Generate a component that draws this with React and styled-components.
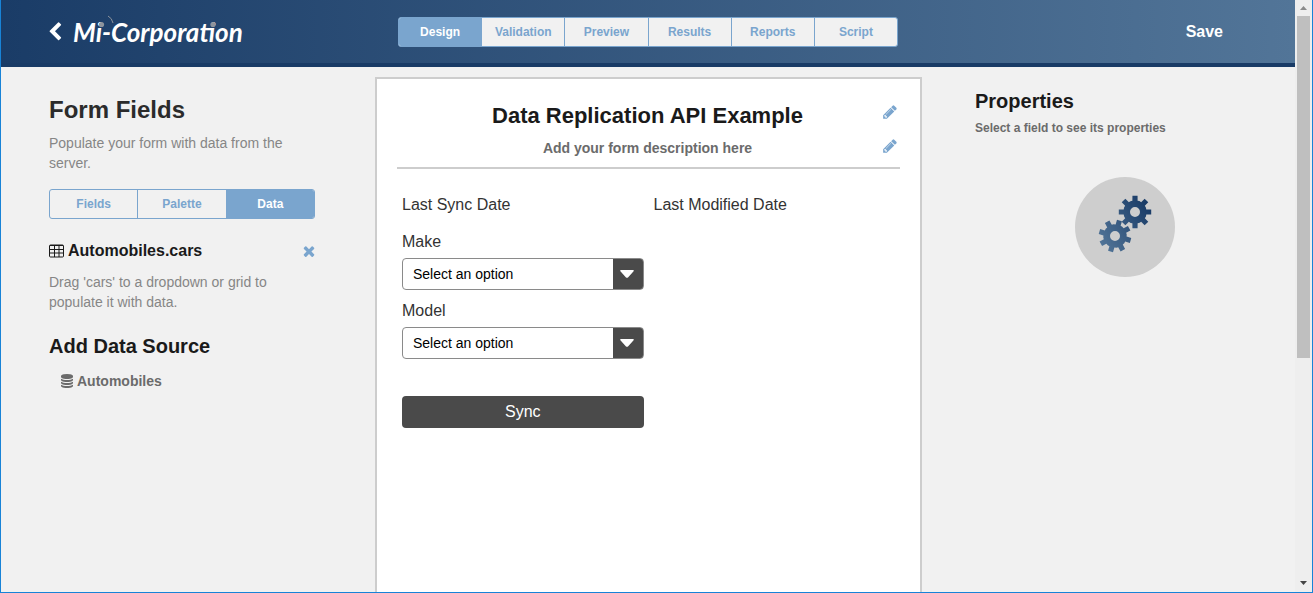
import React from 'react';
import styled, { createGlobalStyle } from 'styled-components';

const color = {
  accent: '#7aa5ce',
  navy: '#193b66',
  page: '#f1f1f1',
  line: '#cdcdcd',
  dark: '#4a4a4a',
  heading: '#1a1a1a',
  muted: '#868686',
  strongMuted: '#6b6b6b',
};

const GlobalStyle = createGlobalStyle`
  *, *::before, *::after { box-sizing: border-box; }
  body {
    margin: 0;
    background: ${color.page};
    font-family: "Liberation Sans", Arial, sans-serif;
    font-size: 14px;
    line-height: 20px;
  }
  h1, h2, h3, p { margin: 0; }
  button, select { font-family: inherit; }
`;

const Frame = styled.div`
  display: flex;
  height: 100vh;
  border: solid #1883d7;
  border-width: 0 1px 1px;
  overflow: hidden;
`;

const Page = styled.div`
  flex: 1;
  min-width: 0;
  display: flex;
  flex-direction: column;
`;

const Header = styled.header`
  display: grid;
  grid-template-columns: 1fr minmax(0, 500px) 1fr;
  align-items: center;
  padding: 0 72px 0 44px;
  height: 67px;
  background: linear-gradient(to right, #1a3c67, #527598);
  border-bottom: 4px solid ${color.navy};
`;

const Brand = styled.a`
  display: flex;
  align-items: center;
  gap: 8px;
  color: #fff;
  text-decoration: none;
`;

const HeaderTabs = styled.nav`
  display: flex;
  margin: 0 -14px 0 14px;
`;

const SaveButton = styled.button`
  justify-self: end;
  padding: 0;
  border: 0;
  background: none;
  color: #fff;
  font-size: 16px;
  font-weight: bold;
  line-height: 20px;
`;

const TabGroup = styled.div`
  flex: 1;
  display: flex;
  height: 30px;
  border: 1px solid ${color.accent};
  border-radius: 3px;
  background: ${color.page};
  overflow: hidden;
`;

const Tab = styled.button`
  flex: 1 1 0;
  padding: 0;
  border: 0;
  border-left: ${(p) => (p.$first ? '0' : `1px solid ${color.accent}`)};
  background: ${(p) => (p.$active ? color.accent : 'transparent')};
  color: ${(p) => (p.$active ? '#fff' : color.accent)};
  font-size: 12px;
  font-weight: bold;
  line-height: 16px;
`;

const Columns = styled.main`
  flex: 1;
  min-height: 0;
  display: grid;
  grid-template-columns: 374fr 547fr 373fr;
`;

const Sidebar = styled.aside`
  padding: 30px 60px 0 48px;
`;

const PanelTitle = styled.h1`
  color: #2b2b2b;
  font-size: 24px;
  line-height: 26px;
`;

const SectionTitle = styled.h2`
  color: ${color.heading};
  font-size: 20px;
  line-height: 24px;
`;

const Hint = styled.p`
  color: ${color.muted};
`;

const SidebarIntro = styled(Hint)`
  padding: 10px 0 16px;
`;

const SourceRow = styled.div`
  display: flex;
  align-items: center;
  gap: 4px;
  margin: 22px -2px 11px 0;
  color: ${color.heading};
`;

const SourceName = styled.h3`
  flex: 1;
  font-size: 16px;
  line-height: 20px;
`;

const IconButton = styled.button`
  display: flex;
  padding: 0;
  border: 0;
  background: none;
  color: ${color.accent};
`;

const AddSource = styled.section`
  padding-top: 22px;
`;

const SourceLink = styled.a`
  display: flex;
  align-items: center;
  gap: 3px;
  padding: 13px 0 0 11px;
  color: ${color.strongMuted};
  font-weight: bold;
  text-decoration: none;
`;

const Canvas = styled.section`
  margin-top: 10px;
  padding: 24px 20px 0;
  border: solid ${color.line};
  border-width: 2px 2px 0;
  background: #fff;
`;

const FormHeader = styled.header`
  display: flex;
  flex-direction: column;
  gap: 9px;
  padding-bottom: 9px;
  border-bottom: 2px solid ${color.line};
`;

const EditableRow = styled.div`
  display: grid;
  grid-template-columns: 32px 1fr 32px;
  padding-right: 2px;
  text-align: center;

  ${IconButton} { justify-self: end; align-self: start; }
`;

const EditTitleButton = styled(IconButton)`
  padding-top: 1px;
`;

const FormTitle = styled.h2`
  color: ${color.heading};
  font-size: 22px;
  line-height: 26px;
`;

const FormDescription = styled.p`
  color: ${color.strongMuted};
  font-weight: bold;
  line-height: 20px;
`;

const FormGrid = styled.div`
  display: grid;
  grid-template-columns: 1fr 1fr;
  column-gap: 10px;
  padding: 26px 5px 0;
  color: #333;
  font-size: 16px;
`;

const FieldStack = styled.div`
  grid-column: 1;
  display: flex;
  flex-direction: column;
  gap: 11px;
  padding-top: 17px;
`;

const Field = styled.div`
  display: flex;
  flex-direction: column;
  gap: 6px;
`;

const SelectBox = styled.div`
  display: flex;
  height: 32px;
  border: 1px solid #8a8a8a;
  border-radius: 4px;
  background: linear-gradient(${color.dark}, ${color.dark}) right / 30px 100% no-repeat #fff;
  overflow: hidden;
`;

const Select = styled.select`
  flex: 1;
  min-width: 0;
  margin-right: -30px;
  padding: 0 40px 0 10px;
  border: 0;
  appearance: none;
  background: transparent;
  color: #000;
  font-size: 14px;
`;

const SelectArrow = styled.svg`
  flex: none;
  align-self: center;
  width: 30px;
  height: 8px;
  pointer-events: none;
`;

const SyncButton = styled.button`
  height: 32px;
  margin-top: 26px;
  border: 0;
  border-radius: 4px;
  background: ${color.dark};
  color: #fff;
  font-size: 16px;
`;

const Properties = styled.aside`
  padding: 22px 20px 0 53px;
`;

const PropertiesHint = styled.p`
  padding-top: 7px;
  color: ${color.strongMuted};
  font-size: 12px;
  font-weight: bold;
  line-height: 16px;
`;

const GearBadge = styled.svg`
  display: block;
  margin: 41px auto 0;
`;

const Scrollbar = styled.div`
  display: flex;
  flex-direction: column;
  align-items: center;
  width: 17px;
  padding: 6px 0 7px;
  background: #eee;
`;

const Thumb = styled.div`
  width: 13px;
  height: 59%;
  margin-top: 6px;
  background: #bfbfbf;
`;

const Spacer = styled.div`
  flex: 1;
`;

const glyphs = {
  back: 'M1427 301l-531 531 531 531q19 19 19 45t-19 45l-166 166q-19 19-45 19t-45-19l-742-742q-19-19-19-45t19-45l742-742q19-19 45-19t45 19l166 166q19 19 19 45t-19 45z',
  pencil: 'M491 1536l91-91-235-235-91 91v107h128v128h107zm523-928q0-22-22-22-10 0-17 7l-542 542q-7 7-7 17 0 22 22 22 10 0 17-7l542-542q7-7 7-17zm-54-192l416 416-832 832h-416v-416zm683 96q0 53-37 90l-166 166-416-416 166-165q36-38 90-38 53 0 91 38l235 234q37 39 37 91z',
  times: 'M1490 1322q0 40-28 68l-136 136q-28 28-68 28t-68-28l-294-294-294 294q-28 28-68 28t-68-28l-136-136q-28-28-28-68t28-68l294-294-294-294q-28-28-28-68t28-68l136-136q28-28 68-28t68 28l294 294 294-294q28-28 68-28t68 28l136 136q28 28 28 68t-28 68l-294 294 294 294q28 28 28 68z',
  database: 'M896 768q237 0 443-43t325-127v170q0 69-103 128t-280 93.5-385 34.5-385-34.5-280-93.5-103-128v-170q119 84 325 127t443 43zm0 768q237 0 443-43t325-127v170q0 69-103 128t-280 93.5-385 34.5-385-34.5-280-93.5-103-128v-170q119 84 325 127t443 43zm0-384q237 0 443-43t325-127v170q0 69-103 128t-280 93.5-385 34.5-385-34.5-280-93.5-103-128v-170q119 84 325 127t443 43zm0-1152q208 0 385 34.5t280 93.5 103 128v128q0 69-103 128t-280 93.5-385 34.5-385-34.5-280-93.5-103-128v-128q0-69 103-128t280-93.5 385-34.5z',
};

const Glyph = ({ name, size }) => (
  <svg width={size} height={size} viewBox="0 0 1792 1792" fill="currentColor" aria-hidden="true">
    <path d={glyphs[name]} />
  </svg>
);

const TableGlyph = () => (
  <svg width="15" height="14" viewBox="0 0 15 14" fill="none" stroke="currentColor" aria-hidden="true">
    <rect x="0.5" y="1" width="14" height="12" rx="1" />
    <path d="M1 1.500h13M1 5.500h13M1 9h13M5.500 2v11M10 2v11" />
  </svg>
);

const Logo = () => (
  <svg width="174" height="40" viewBox="0 0 174 40" role="img" aria-label="Mi-Corporation">
    <text x="0" y="30" fill="#fff" fontFamily="Lato, sans-serif" fontSize="26" fontWeight="bold" fontStyle="italic">
      Mi-Corporation
    </text>
    <circle cx="28.500" cy="12.500" r="2.600" fill="#8d949d" />
    <circle cx="140" cy="12.500" r="2.600" fill="#8d949d" />
    <path d="M35 4q4 2 5 7" fill="none" stroke="#8d949d" strokeWidth="1" />
  </svg>
);

/* Outline of an eight-toothed gear centred on the origin. */
const gearPath = (turn) => {
  const point = (radius, degrees) => {
    const a = (degrees * Math.PI) / 180;
    return `${(radius * Math.cos(a)).toFixed(2)} ${(radius * Math.sin(a)).toFixed(2)}`;
  };
  const points = [];
  for (let i = 0; i < 8; i += 1) {
    const a = turn + i * 45;
    points.push(point(11.6, a - 13), point(16.4, a - 9), point(16.4, a + 9), point(11.6, a + 13), point(11.8, a + 22));
  }
  return `M${points.join('L')}ZM5 0A5 5 0 1 0 -5 0A5 5 0 1 0 5 0Z`;
};

const Gears = () => (
  <GearBadge width="100" height="100" viewBox="0 0 100 100" aria-hidden="true">
    <defs>
      <linearGradient id="gearFill" gradientUnits="userSpaceOnUse" x1="24" y1="66" x2="76" y2="34">
        <stop offset="0" stopColor="#527598" />
        <stop offset="1" stopColor="#1a3c67" />
      </linearGradient>
      <mask id="gearMask">
        <path transform="translate(60 35)" d={gearPath(0)} fill="#fff" fillRule="evenodd" />
        <path transform="translate(40 59)" d={gearPath(16)} fill="#fff" fillRule="evenodd" />
      </mask>
    </defs>
    <circle cx="50" cy="50" r="50" fill="#cecece" />
    <rect width="100" height="100" fill="url(#gearFill)" mask="url(#gearMask)" />
  </GearBadge>
);

const Tabs = ({ items, active }) => (
  <TabGroup>
    {items.map((item, i) => (
      <Tab key={item} type="button" $first={i === 0} $active={item === active}>{item}</Tab>
    ))}
  </TabGroup>
);

const Dropdown = ({ id, label }) => (
  <Field>
    <label htmlFor={id}>{label}</label>
    <SelectBox>
      <Select id={id} defaultValue="">
        <option value="">Select an option</option>
      </Select>
      <SelectArrow viewBox="0 0 30 8" aria-hidden="true">
        <path d="M8 0h12q1.500 0 .6 1.200l-5.600 6.200q-1 .9-2 0l-5.600-6.200q-.9-1.200.6-1.200z" fill="#fff" />
      </SelectArrow>
    </SelectBox>
  </Field>
);

export default function App() {
  return (
    <>
      <GlobalStyle />
      <Frame>
        <Page>
          <Header>
            <Brand href="#">
              <Glyph name="back" size={20} />
              <Logo />
            </Brand>
            <HeaderTabs>
              <Tabs items={['Design', 'Validation', 'Preview', 'Results', 'Reports', 'Script']} active="Design" />
            </HeaderTabs>
            <SaveButton type="button">Save</SaveButton>
          </Header>
          <Columns>
            <Sidebar>
              <PanelTitle>Form Fields</PanelTitle>
              <SidebarIntro>Populate your form with data from the server.</SidebarIntro>
              <Tabs items={['Fields', 'Palette', 'Data']} active="Data" />
              <SourceRow>
                <TableGlyph />
                <SourceName>Automobiles.cars</SourceName>
                <IconButton type="button" aria-label="Remove Automobiles.cars">
                  <Glyph name="times" size={16} />
                </IconButton>
              </SourceRow>
              <Hint>Drag 'cars' to a dropdown or grid to populate it with data.</Hint>
              <AddSource>
                <SectionTitle>Add Data Source</SectionTitle>
                <SourceLink href="#">
                  <Glyph name="database" size={14} />
                  Automobiles
                </SourceLink>
              </AddSource>
            </Sidebar>
            <Canvas>
              <FormHeader>
                <EditableRow>
                  <span />
                  <FormTitle>Data Replication API Example</FormTitle>
                  <EditTitleButton type="button" aria-label="Edit title"><Glyph name="pencil" size={16} /></EditTitleButton>
                </EditableRow>
                <EditableRow>
                  <span />
                  <FormDescription>Add your form description here</FormDescription>
                  <IconButton type="button" aria-label="Edit description"><Glyph name="pencil" size={16} /></IconButton>
                </EditableRow>
              </FormHeader>
              <FormGrid>
                <span>Last Sync Date</span>
                <span>Last Modified Date</span>
                <FieldStack>
                  <Dropdown id="make" label="Make" />
                  <Dropdown id="model" label="Model" />
                  <SyncButton type="button">Sync</SyncButton>
                </FieldStack>
              </FormGrid>
            </Canvas>
            <Properties>
              <SectionTitle>Properties</SectionTitle>
              <PropertiesHint>Select a field to see its properties</PropertiesHint>
              <Gears />
            </Properties>
          </Columns>
        </Page>
        <Scrollbar aria-hidden="true">
          <svg width="7" height="4"><path d="M0 4L3.500 0L7 4z" fill="#8b8b8b" /></svg>
          <Thumb />
          <Spacer />
          <svg width="7" height="4"><path d="M0 0L3.500 4L7 0z" fill="#444" /></svg>
        </Scrollbar>
      </Frame>
    </>
  );
}
